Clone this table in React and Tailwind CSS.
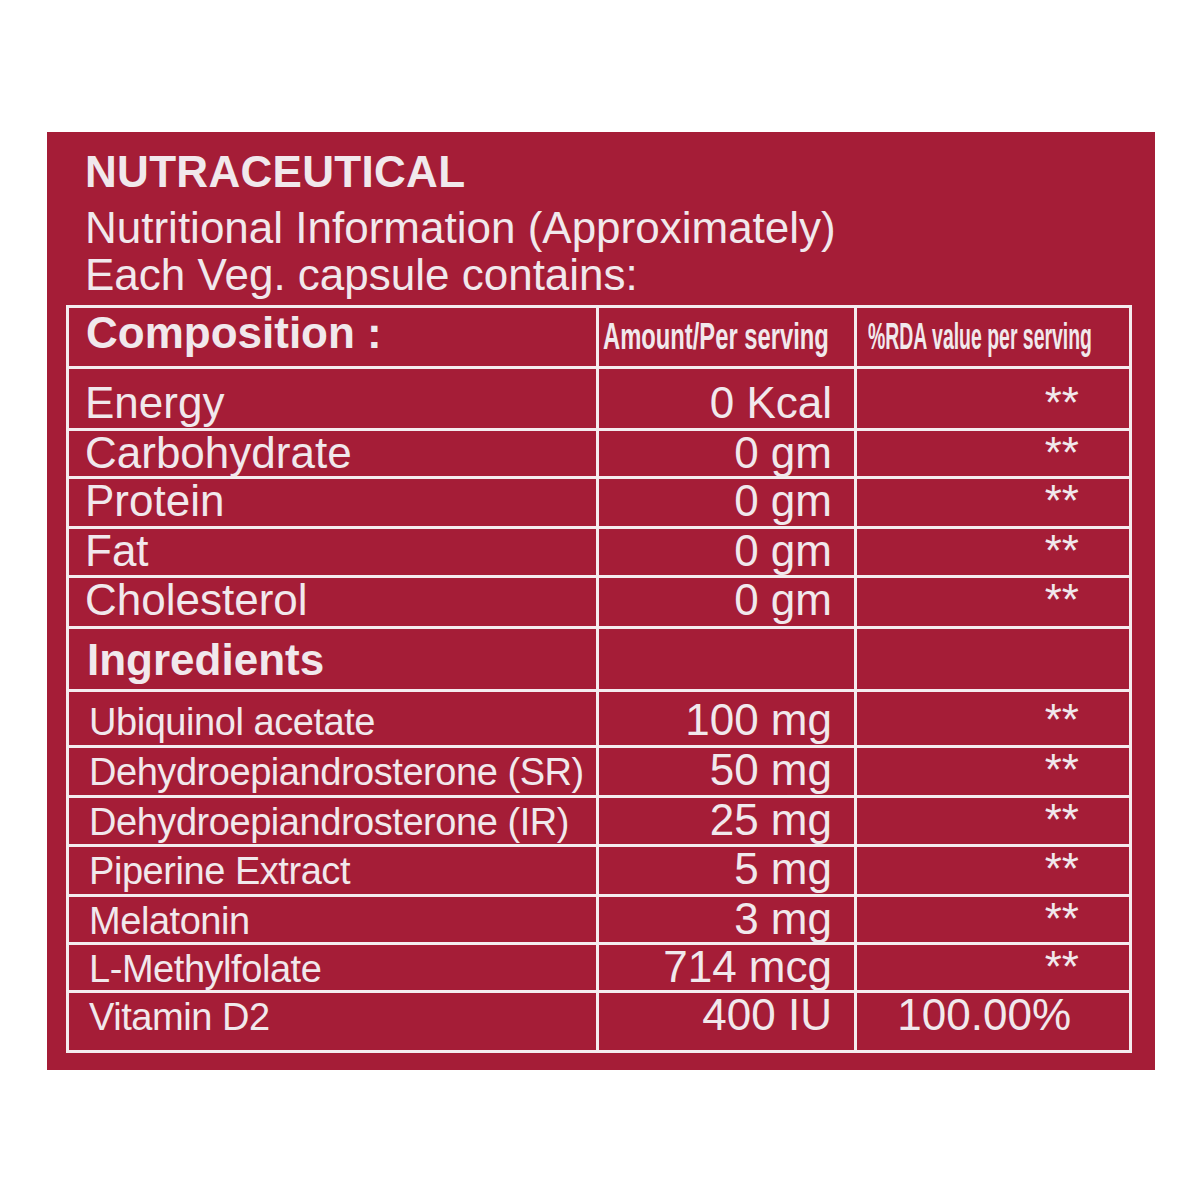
import React from "react";

const rows = [
  { name: "Energy", amount: "0 Kcal", rda: "**", h: "h-[62px]", pb: "pb-[3px]" },
  { name: "Carbohydrate", amount: "0 gm", rda: "**", h: "h-[48px]", pb: "pb-[2px]" },
  { name: "Protein", amount: "0 gm", rda: "**", h: "h-[50px]", pb: "pb-[4px]" },
  { name: "Fat", amount: "0 gm", rda: "**", h: "h-[49px]", pb: "pb-[5px]" },
  { name: "Cholesterol", amount: "0 gm", rda: "**", h: "h-[51px]", pb: "pb-[6px]" },
];

const ingredients = [
  { name: "Ubiquinol acetate", amount: "100 mg", rda: "**", h: "h-[56px]", pb: "pb-[3px]" },
  { name: "Dehydroepiandrosterone (SR)", amount: "50 mg", rda: "**", h: "h-[50px]", pb: "pb-[3px]" },
  { name: "Dehydroepiandrosterone (IR)", amount: "25 mg", rda: "**", h: "h-[49px]", pb: "pb-[4px]" },
  { name: "Piperine Extract", amount: "5 mg", rda: "**", h: "h-[50px]", pb: "pb-[5px]" },
  { name: "Melatonin", amount: "3 mg", rda: "**", h: "h-[48px]", pb: "pb-[5px]" },
  { name: "L-Methylfolate", amount: "714 mcg", rda: "**", h: "h-[48px]", pb: "pb-[6px]" },
];

const Row = ({ row, small, last }) => (
  <div
    className={`grid grid-cols-[527px_258px_1fr] ${row.h} ${
      last ? "" : "border-b-[3px] border-[#f4ecef]"
    }`}>
    <div
      className={`flex items-end whitespace-nowrap ${row.pb} ${
        small
          ? "pl-[20px] text-[38px] leading-[40px] tracking-[-0.45px]"
          : "pl-[16px] text-[44px] leading-[44px]"
      }`}>
      {row.name}
    </div>
    <div
      className={`flex items-end justify-end border-l-[3px] border-[#f4ecef] pr-[22px] text-[44px] leading-[44px] whitespace-nowrap ${row.pb}`}>
      {row.amount}
    </div>
    <div
      className={`flex items-end justify-end border-l-[3px] border-[#f4ecef] text-[44px] leading-[44px] whitespace-nowrap ${
        row.rda === "**" ? "pr-[50px] text-[40px]" : "pr-[58px]"
      } ${row.pb}`}>
      {row.rda}
    </div>
  </div>
);

const App = () => {
  return (
    <div className="w-[1200px] h-[1200px] overflow-hidden bg-white pt-[132px] pl-[47px] font-['Liberation_Sans',Arial,sans-serif] text-[#f1e8ec]">
      <div className="w-[1108px] h-[938px] bg-[#a51d37] pt-[18px]">
        {/* Heading */}
        <div className="pl-[38px]">
          <div className="h-[56px] text-[44px] leading-[44px] font-bold tracking-[0.3px]">
            NUTRACEUTICAL
          </div>
          <div className="h-[47px] text-[44px] leading-[44px]">
            Nutritional Information (Approximately)
          </div>
          <div className="h-[52px] text-[44px] leading-[44px]">
            Each Veg. capsule contains:
          </div>
        </div>

        {/* Table */}
        <div className="ml-[19px] w-[1066px] border-[3px] border-[#f4ecef]">
          <div className="grid grid-cols-[527px_258px_1fr] h-[61px] border-b-[3px] border-[#f4ecef]">
            <div className="flex items-end pl-[17px] pb-[11px] text-[44px] leading-[44px] font-bold whitespace-nowrap">
              Composition :
            </div>
            <div className="flex items-end overflow-hidden border-l-[3px] border-[#f4ecef] pb-[9px] pl-[4px]">
              <span className="inline-block w-[342px] shrink-0 origin-left scale-x-[0.66] text-[36px] leading-[40px] font-bold whitespace-nowrap">
                Amount/Per serving
              </span>
            </div>
            <div className="flex items-end overflow-hidden border-l-[3px] border-[#f4ecef] pb-[9px] pl-[11px]">
              <span className="inline-block w-[416px] shrink-0 origin-left scale-x-[0.54] text-[36px] leading-[40px] font-bold whitespace-nowrap">
                %RDA value per serving
              </span>
            </div>
          </div>

          {rows.map((row) => (
            <Row key={row.name} row={row} />
          ))}

          <div className="grid grid-cols-[527px_258px_1fr] h-[63px] border-b-[3px] border-[#f4ecef]">
            <div className="flex items-end pl-[18px] pb-[7px] text-[44px] leading-[44px] font-bold">
              Ingredients
            </div>
            <div className="border-l-[3px] border-[#f4ecef]" />
            <div className="border-l-[3px] border-[#f4ecef]" />
          </div>

          {ingredients.map((row) => (
            <Row key={row.name} row={row} small />
          ))}

          <Row
            row={{
              name: "Vitamin D2",
              amount: "400 IU",
              rda: "100.00%",
              h: "h-[57px]",
              pb: "pb-[15px]",
            }}
            small
            last
          />
        </div>
      </div>
    </div>
  );
};

export default App;
